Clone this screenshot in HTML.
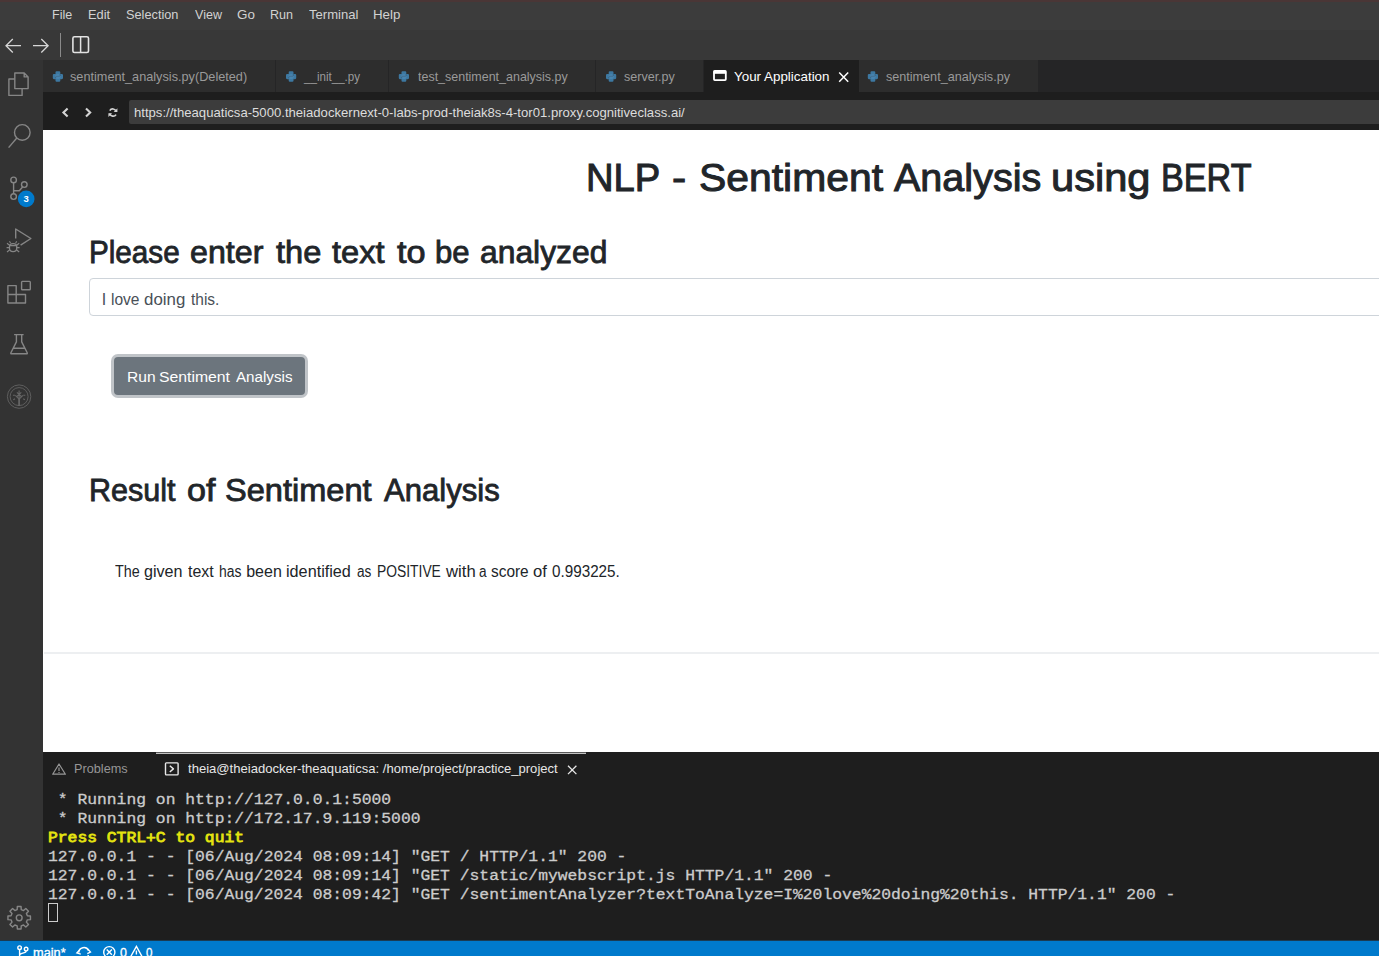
<!DOCTYPE html>
<html>
<head>
<meta charset="utf-8">
<style>
*{box-sizing:border-box;margin:0;padding:0}
html,body{width:1379px;height:956px;overflow:hidden;background:#1e1e1e;font-family:"Liberation Sans",sans-serif;}
.abs{position:absolute}
.t{position:absolute;white-space:nowrap;transform-origin:0 0}
#menubar{position:absolute;left:0;top:0;width:1379px;height:30px;background:#3c3c3c;border-top:2px solid #4a3636}
#toolbar{position:absolute;left:0;top:30px;width:1379px;height:30px;background:#383838}
#activity{position:absolute;left:0;top:60px;width:43px;height:880px;background:#333333}
#tabs{position:absolute;left:43px;top:60px;width:1336px;height:32px;background:#252526}
.tab{position:absolute;top:0;height:32px;background:#2d2d2d;color:#9a9a9a;font-size:13px;line-height:32px;white-space:nowrap;border-right:1px solid #252526}
.tab.active{background:#1e1e1e;color:#ffffff;border-right:none}
.tab .lbl{position:absolute;top:0;transform-origin:0 50%}
#urlbar{position:absolute;left:43px;top:92px;width:1336px;height:38px;background:#1e1e1e}
#urlinput{position:absolute;left:86px;top:8px;width:1252px;height:24px;background:#3c3c3c;border-radius:2px}
#web{position:absolute;left:43px;top:130px;width:1336px;height:622px;background:#ffffff;overflow:hidden;color:#212529}
#panel{position:absolute;left:43px;top:752px;width:1336px;height:188px;background:#1e1e1e}
#status span{-webkit-text-stroke:0.3px #fff}
#status{position:absolute;left:0;top:940px;width:1379px;height:16px;background:#007acc;overflow:hidden}
#term{position:absolute;left:4.85px;top:38.5px;font-family:"Liberation Mono",monospace;font-size:15.5px;line-height:19px;color:#cccccc;white-space:pre;transform:scaleX(1.0539);transform-origin:0 0;-webkit-text-stroke:0.3px #cccccc}
#term .y{color:#e5e510;-webkit-text-stroke:0.8px #e5e510}
svg{position:absolute;overflow:visible}
</style>
</head>
<body>
<div id="menubar"></div>
<div class="t" id="m0" style="left:52.24px;top:5.20px;font-size:13px;line-height:19.5px;color:#d2d2d2;transform:scaleX(0.9650)">File</div>
<div class="t" id="m1" style="left:88.01px;top:5.20px;font-size:13px;line-height:19.5px;color:#d2d2d2;transform:scaleX(0.9857)">Edit</div>
<div class="t" id="m2" style="left:125.82px;top:5.20px;font-size:13px;line-height:19.5px;color:#d2d2d2;transform:scaleX(0.9808)">Selection</div>
<div class="t" id="m3" style="left:194.90px;top:5.20px;font-size:13px;line-height:19.5px;color:#d2d2d2;transform:scaleX(0.9643)">View</div>
<div class="t" id="m4" style="left:236.87px;top:5.20px;font-size:13px;line-height:19.5px;color:#d2d2d2;transform:scaleX(1.0312)">Go</div>
<div class="t" id="m5" style="left:269.94px;top:5.20px;font-size:13px;line-height:19.5px;color:#d2d2d2;transform:scaleX(0.9636)">Run</div>
<div class="t" id="m6" style="left:308.70px;top:5.20px;font-size:13px;line-height:19.5px;color:#d2d2d2;transform:scaleX(1.0042)">Terminal</div>
<div class="t" id="m7" style="left:372.98px;top:5.20px;font-size:13px;line-height:19.5px;color:#d2d2d2;transform:scaleX(1.0240)">Help</div>
<div id="toolbar"></div>
<svg style="left:0;top:30px" width="100" height="30" viewBox="0 30 100 30" fill="none" stroke="#d6d6d6" stroke-width="1.3" stroke-linecap="butt" stroke-linejoin="miter">
<path d="M21,45.7 H6 M12.8,39 L6,45.7 L12.8,52.5"/>
<path d="M33,45.7 H48 M41.3,39 L48.1,45.7 L41.3,52.5"/>
<path d="M60.5,33 V57" stroke="#8a8a8a" stroke-width="1"/>
<rect x="72.9" y="36.7" width="15.6" height="15.8" rx="1.6" stroke="#e2e2e2" stroke-width="1.6"/>
<path d="M80.6,37 V52.4" stroke="#e2e2e2" stroke-width="1.5"/>
</svg>
<div id="activity"></div>
<svg style="left:0;top:60px" width="43" height="880" viewBox="0 60 43 880" fill="none" stroke="#868686" stroke-width="1.4" stroke-linejoin="round">
<!-- files -->
<path d="M14.8,73 H24.2 L28.1,76.9 V88.6 H14.8 Z M24.2,73 V76.9 H28.1"/>
<path d="M14.8,79 H8.9 V95.4 H22.1 V88.6"/>
<!-- search -->
<circle cx="22.3" cy="132.4" r="7.8"/>
<path d="M16.8,138 L8.6,147.6"/>
<!-- scm -->
<circle cx="13.6" cy="179.9" r="2.8"/><circle cx="13.6" cy="196.6" r="2.8"/><circle cx="24.3" cy="184.6" r="2.8"/>
<path d="M13.6,182.7 V193.8 M22.6,187 L19.3,190.7 H13.6"/>
<circle cx="26.2" cy="198.9" r="8.3" fill="#007acc" stroke="none"/>
<!-- debug -->
<path d="M15.7,238.5 V229 L30.9,238.5 L20.6,245.2"/>
<path d="M9.5,246.3 C9.5,242.6 16.7,242.6 16.7,246.3 V248.6 C16.7,252.6 9.5,252.6 9.5,248.6 Z" stroke-width="1.3"/>
<path d="M9.5,245.6 H16.7 M9.5,245.2 L7,243.3 M9.5,247.6 H6.6 M9.5,250 L7,252 M16.7,245.2 L19.2,243.3 M16.7,247.6 H19.6 M16.7,250 L19.2,252 M10.6,242.8 L9.4,241.4 M15.6,242.8 L16.8,241.4" stroke-width="1.1"/>
<!-- extensions -->
<path d="M7.9,285.6 H16.2 V294.5 H25.5 V303 H7.9 Z M7.9,294.5 H16.2 V303"/>
<rect x="21.6" y="281.4" width="8.7" height="8.3" rx="0.8"/>
<!-- flask -->
<path d="M14.1,334.6 H23.6 M16.4,334.6 V341.9 L10.9,352.7 Q10.4,353.8 11.6,353.8 H26.5 Q27.7,353.8 27.2,352.7 L21.7,341.9 V334.6 M13.3,348.2 H24.8"/>
<!-- tree -->
<g stroke="#5e5e5e" stroke-width="1">
<circle cx="19.1" cy="396.6" r="11.7"/><circle cx="19.1" cy="396.6" r="9"/>
<path d="M19.1,406 V398.2" stroke-width="1.7" stroke="#686868"/><path d="M19.1,399.2 L15.3,395.4 M19.1,399.2 L22.9,395.4 M19.1,398 V390.4 M16.9,392.3 L21.3,396.5 M21.3,392.3 L16.9,396.5 M12.9,395.2 h2 M23.3,395.2 h2 M13.3,399.8 l1.7,-1.1 M24.9,399.8 l-1.7,-1.1" stroke-width="1.1" stroke="#666666"/>
</g>
<!-- gear -->
<path d="M17.17,909.65 L17.33,906.55 L21.07,906.55 L21.23,909.65 L23.53,910.60 L25.83,908.52 L28.48,911.17 L26.40,913.47 L27.35,915.77 L30.45,915.93 L30.45,919.67 L27.35,919.83 L26.40,922.13 L28.48,924.43 L25.83,927.08 L23.53,925.00 L21.23,925.95 L21.07,929.05 L17.33,929.05 L17.17,925.95 L14.87,925.00 L12.57,927.08 L9.92,924.43 L12.00,922.13 L11.05,919.83 L7.95,919.67 L7.95,915.93 L11.05,915.77 L12.00,913.47 L9.92,911.17 L12.57,908.52 L14.87,910.60 Z"/>
<circle cx="19.2" cy="917.8" r="2.9"/>
</svg>
<div class="t" style="left:23.6px;top:192.6px;font-size:9.5px;line-height:11px;font-weight:bold;color:#fff">3</div>
<div id="tabs">
<div class="tab" style="left:0px;width:232.5px"></div>
<div class="tab" style="left:232.5px;width:113px"></div>
<div class="tab" style="left:345.5px;width:207px"></div>
<div class="tab" style="left:552.5px;width:108.1px"></div>
<div class="tab active" style="left:660.6px;width:155px"></div>
<div class="tab" style="left:815.6px;width:180.4px"></div>
</div>
<div class="t" id="tb0" style="left:69.92px;top:66.90px;font-size:13px;line-height:19.5px;color:#9a9a9a;transform:scaleX(0.9767)">sentiment_analysis.py(Deleted)</div>
<div class="t" id="tb1" style="left:304.00px;top:66.90px;font-size:13px;line-height:19.5px;color:#9a9a9a;transform:scaleX(0.8921)">__init__.py</div>
<div class="t" id="tb2" style="left:417.80px;top:66.90px;font-size:13px;line-height:19.5px;color:#9a9a9a;transform:scaleX(0.9590)">test_sentiment_analysis.py</div>
<div class="t" id="tb3" style="left:623.74px;top:66.90px;font-size:13px;line-height:19.5px;color:#9a9a9a;transform:scaleX(0.9635)">server.py</div>
<div class="t" id="tb4" style="left:734.47px;top:66.90px;font-size:13px;line-height:19.5px;color:#ffffff;transform:scaleX(1.0297)">Your Application</div>
<div class="t" id="tb5" style="left:885.53px;top:66.90px;font-size:13px;line-height:19.5px;color:#9a9a9a;transform:scaleX(0.9693)">sentiment_analysis.py</div>


<div id="urlbar">
<div id="urlinput"></div>
<div class="t" id="urltxt" style="left:90.79px;top:11.10px;font-size:13px;line-height:19.5px;color:#dddddd;transform:scaleX(1.0086)">https://theaquaticsa-5000.theiadockernext-0-labs-prod-theiak8s-4-tor01.proxy.cognitiveclass.ai/</div>
</div>
<svg style="left:0;top:60px" width="1379" height="72" viewBox="0 60 1379 72" fill="none"><path d="M55.50,72.30 q0,-1.1 1.1,-1.1 h2.6 q1.1,0 1.1,1.1 v1.7 h1.6 q1.1,0 1.1,1.1 v3 q0,1.1 -1.1,1.1 h-1.6 v1.5 q0,1.1 -1.1,1.1 h-2.6 q-1.1,0 -1.1,-1.1 v-1.5 h-1.6 q-1.1,0 -1.1,-1.1 v-3 q0,-1.1 1.1,-1.1 h1.6 z" fill="#3d78a1" stroke="none"/><path d="M55.70,78.10 v-0.9 q0,-0.9 0.9,-0.9 h2.6 q0.9,0 0.9,-0.9 v-0.9" stroke="#2d2d2d" stroke-width="0.55" fill="none" opacity="0.75"/><circle cx="57.90" cy="76.50" r="2.6" fill="#5b9ccb" opacity="0.35" stroke="none"/><path d="M288.70,72.30 q0,-1.1 1.1,-1.1 h2.6 q1.1,0 1.1,1.1 v1.7 h1.6 q1.1,0 1.1,1.1 v3 q0,1.1 -1.1,1.1 h-1.6 v1.5 q0,1.1 -1.1,1.1 h-2.6 q-1.1,0 -1.1,-1.1 v-1.5 h-1.6 q-1.1,0 -1.1,-1.1 v-3 q0,-1.1 1.1,-1.1 h1.6 z" fill="#3d78a1" stroke="none"/><path d="M288.90,78.10 v-0.9 q0,-0.9 0.9,-0.9 h2.6 q0.9,0 0.9,-0.9 v-0.9" stroke="#2d2d2d" stroke-width="0.55" fill="none" opacity="0.75"/><circle cx="291.10" cy="76.50" r="2.6" fill="#5b9ccb" opacity="0.35" stroke="none"/><path d="M401.50,72.30 q0,-1.1 1.1,-1.1 h2.6 q1.1,0 1.1,1.1 v1.7 h1.6 q1.1,0 1.1,1.1 v3 q0,1.1 -1.1,1.1 h-1.6 v1.5 q0,1.1 -1.1,1.1 h-2.6 q-1.1,0 -1.1,-1.1 v-1.5 h-1.6 q-1.1,0 -1.1,-1.1 v-3 q0,-1.1 1.1,-1.1 h1.6 z" fill="#3d78a1" stroke="none"/><path d="M401.70,78.10 v-0.9 q0,-0.9 0.9,-0.9 h2.6 q0.9,0 0.9,-0.9 v-0.9" stroke="#2d2d2d" stroke-width="0.55" fill="none" opacity="0.75"/><circle cx="403.90" cy="76.50" r="2.6" fill="#5b9ccb" opacity="0.35" stroke="none"/><path d="M608.70,72.30 q0,-1.1 1.1,-1.1 h2.6 q1.1,0 1.1,1.1 v1.7 h1.6 q1.1,0 1.1,1.1 v3 q0,1.1 -1.1,1.1 h-1.6 v1.5 q0,1.1 -1.1,1.1 h-2.6 q-1.1,0 -1.1,-1.1 v-1.5 h-1.6 q-1.1,0 -1.1,-1.1 v-3 q0,-1.1 1.1,-1.1 h1.6 z" fill="#3d78a1" stroke="none"/><path d="M608.90,78.10 v-0.9 q0,-0.9 0.9,-0.9 h2.6 q0.9,0 0.9,-0.9 v-0.9" stroke="#2d2d2d" stroke-width="0.55" fill="none" opacity="0.75"/><circle cx="611.10" cy="76.50" r="2.6" fill="#5b9ccb" opacity="0.35" stroke="none"/><path d="M870.50,72.30 q0,-1.1 1.1,-1.1 h2.6 q1.1,0 1.1,1.1 v1.7 h1.6 q1.1,0 1.1,1.1 v3 q0,1.1 -1.1,1.1 h-1.6 v1.5 q0,1.1 -1.1,1.1 h-2.6 q-1.1,0 -1.1,-1.1 v-1.5 h-1.6 q-1.1,0 -1.1,-1.1 v-3 q0,-1.1 1.1,-1.1 h1.6 z" fill="#3d78a1" stroke="none"/><path d="M870.70,78.10 v-0.9 q0,-0.9 0.9,-0.9 h2.6 q0.9,0 0.9,-0.9 v-0.9" stroke="#2d2d2d" stroke-width="0.55" fill="none" opacity="0.75"/><circle cx="872.90" cy="76.50" r="2.6" fill="#5b9ccb" opacity="0.35" stroke="none"/><rect x="714" y="70.9" width="11.8" height="9.2" rx="0.8" stroke="#ffffff" stroke-width="1.8"/><path d="M713.6,72.2 H726.2" stroke="#ffffff" stroke-width="3.2"/><path d="M839.2,72.6 L848.2,81.8 M848.2,72.6 L839.2,81.8" stroke="#ffffff" stroke-width="1.5"/><path d="M67.6,108.4 L63.4,112.5 L67.6,116.6" stroke="#d4d4d4" stroke-width="2.1"/><path d="M86,108.4 L90.2,112.5 L86,116.6" stroke="#d4d4d4" stroke-width="2.1"/><path d="M116,111.6 A3.4,3.4 0 0 0 109.8,110.6 M109.8,113.6 A3.4,3.4 0 0 0 116,114.6" stroke="#d4d4d4" stroke-width="1.7"/><path d="M117.4,108.2 V111.9 H113.7 Z M108.4,117 V113.3 H112.1 Z" fill="#d4d4d4"/></svg>
<div id="web">
<div class="t" id="h1w0" style="left:543.46px;top:19.00px;font-size:39px;line-height:58.5px;-webkit-text-stroke:1px #212529;transform:scaleX(0.9803)">NLP</div>
<div class="t" id="h1w1" style="left:628.91px;top:19.00px;font-size:39px;line-height:58.5px;-webkit-text-stroke:1px #212529;transform:scaleX(1.0909)">-</div>
<div class="t" id="h1w2" style="left:655.55px;top:19.00px;font-size:39px;line-height:58.5px;-webkit-text-stroke:1px #212529;transform:scaleX(1.0480)">Sentiment</div>
<div class="t" id="h1w3" style="left:851.00px;top:19.00px;font-size:39px;line-height:58.5px;-webkit-text-stroke:1px #212529;transform:scaleX(1.0138)">Analysis</div>
<div class="t" id="h1w4" style="left:1007.87px;top:19.00px;font-size:39px;line-height:58.5px;-webkit-text-stroke:1px #212529;transform:scaleX(1.0674)">using</div>
<div class="t" id="h1w5" style="left:1118.37px;top:19.00px;font-size:39px;line-height:58.5px;-webkit-text-stroke:1px #212529;transform:scaleX(0.8760)">BERT</div>
<div class="t" id="h2aw0" style="left:46.16px;top:99.75px;font-size:30.5px;line-height:45.75px;-webkit-text-stroke:0.8px #212529;transform:scaleX(0.9722)">Please</div>
<div class="t" id="h2aw1" style="left:146.84px;top:99.75px;font-size:30.5px;line-height:45.75px;-webkit-text-stroke:0.8px #212529;transform:scaleX(1.0551)">enter</div>
<div class="t" id="h2aw2" style="left:232.50px;top:99.75px;font-size:30.5px;line-height:45.75px;-webkit-text-stroke:0.8px #212529;transform:scaleX(1.0690)">the</div>
<div class="t" id="h2aw3" style="left:288.50px;top:99.75px;font-size:30.5px;line-height:45.75px;-webkit-text-stroke:0.8px #212529;transform:scaleX(1.0680)">text</div>
<div class="t" id="h2aw4" style="left:353.80px;top:99.75px;font-size:30.5px;line-height:45.75px;-webkit-text-stroke:0.8px #212529;transform:scaleX(1.1240)">to</div>
<div class="t" id="h2aw5" style="left:392.18px;top:99.75px;font-size:30.5px;line-height:45.75px;-webkit-text-stroke:0.8px #212529;transform:scaleX(1.0188)">be</div>
<div class="t" id="h2aw6" style="left:436.56px;top:99.75px;font-size:30.5px;line-height:45.75px;-webkit-text-stroke:0.8px #212529;transform:scaleX(1.0433)">analyzed</div>
<div class="abs" style="left:46px;top:148px;width:1400px;height:38px;border:1px solid #ced4da;border-radius:4px"></div>
<div class="t" id="inpw0" style="left:58.70px;top:157.90px;font-size:16px;line-height:24px;color:#495057;transform:scaleX(1.0000)">I</div>
<div class="t" id="inpw1" style="left:68.03px;top:157.90px;font-size:16px;line-height:24px;color:#495057;transform:scaleX(0.9714)">love</div>
<div class="t" id="inpw2" style="left:100.55px;top:157.90px;font-size:16px;line-height:24px;color:#495057;transform:scaleX(1.0541)">doing</div>
<div class="t" id="inpw3" style="left:147.50px;top:157.90px;font-size:16px;line-height:24px;color:#495057;transform:scaleX(0.9679)">this.</div>
<div class="abs" style="left:71px;top:227px;width:191px;height:38px;background:#6c757d;border-radius:4px;box-shadow:0 0 0 3px rgba(130,138,145,.5)"></div>
<div class="t" id="btnw0" style="left:83.90px;top:235.10px;font-size:15.5px;line-height:23.25px;color:#fff;transform:scaleX(1.0037)">Run</div>
<div class="t" id="btnw1" style="left:115.78px;top:235.10px;font-size:15.5px;line-height:23.25px;color:#fff;transform:scaleX(1.0174)">Sentiment</div>
<div class="t" id="btnw2" style="left:192.60px;top:235.10px;font-size:15.5px;line-height:23.25px;color:#fff;transform:scaleX(0.9789)">Analysis</div>
<div class="t" id="h2bw0" style="left:46.10px;top:337.90px;font-size:30.5px;line-height:45.75px;-webkit-text-stroke:0.8px #212529;transform:scaleX(1.0012)">Result</div>
<div class="t" id="h2bw1" style="left:143.58px;top:337.90px;font-size:30.5px;line-height:45.75px;-webkit-text-stroke:0.8px #212529;transform:scaleX(1.1160)">of</div>
<div class="t" id="h2bw2" style="left:181.93px;top:337.90px;font-size:30.5px;line-height:45.75px;-webkit-text-stroke:0.8px #212529;transform:scaleX(1.0672)">Sentiment</div>
<div class="t" id="h2bw3" style="left:340.50px;top:337.90px;font-size:30.5px;line-height:45.75px;-webkit-text-stroke:0.8px #212529;transform:scaleX(1.0186)">Analysis</div>
<div class="t" id="rw0" style="left:71.80px;top:429.70px;font-size:16px;line-height:24px;transform:scaleX(0.8963)">The</div>
<div class="t" id="rw1" style="left:101.09px;top:429.70px;font-size:16px;line-height:24px;transform:scaleX(1.0083)">given</div>
<div class="t" id="rw2" style="left:144.50px;top:429.70px;font-size:16px;line-height:24px;transform:scaleX(0.9962)">text</div>
<div class="t" id="rw3" style="left:175.73px;top:429.70px;font-size:16px;line-height:24px;transform:scaleX(0.8708)">has</div>
<div class="t" id="rw4" style="left:203.20px;top:429.70px;font-size:16px;line-height:24px;transform:scaleX(1.0000)">been</div>
<div class="t" id="rw5" style="left:243.39px;top:429.70px;font-size:16px;line-height:24px;transform:scaleX(1.0129)">identified</div>
<div class="t" id="rw6" style="left:313.75px;top:429.70px;font-size:16px;line-height:24px;transform:scaleX(0.8500)">as</div>
<div class="t" id="rw7" style="left:333.53px;top:429.70px;font-size:16px;line-height:24px;transform:scaleX(0.8653)">POSITIVE</div>
<div class="t" id="rw8" style="left:402.60px;top:429.70px;font-size:16px;line-height:24px;transform:scaleX(1.0429)">with</div>
<div class="t" id="rw9" style="left:435.85px;top:429.70px;font-size:16px;line-height:24px;transform:scaleX(0.8500)">a</div>
<div class="t" id="rw10" style="left:448.24px;top:429.70px;font-size:16px;line-height:24px;transform:scaleX(0.9632)">score</div>
<div class="t" id="rw11" style="left:490.36px;top:429.70px;font-size:16px;line-height:24px;transform:scaleX(1.0385)">of</div>
<div class="t" id="rw12" style="left:509.25px;top:429.70px;font-size:16px;line-height:24px;transform:scaleX(0.9522)">0.993225.</div>
<div class="abs" style="left:1px;top:522px;width:1336px;height:2px;background:#edeff1"></div>
</div>
<div id="panel">
<div class="abs" style="left:113px;top:0;width:430px;height:1px;background:#5a5a5a"></div><div class="abs" style="left:113px;top:1px;width:430px;height:1px;background:#c2c2c2"></div>
<div class="t" id="prob" style="left:30.52px;top:7.40px;font-size:13px;line-height:19.5px;color:#969696;transform:scaleX(0.9778)">Problems</div>
<div class="t" id="ttl" style="left:144.60px;top:7.40px;font-size:13px;line-height:19.5px;color:#e7e7e7;transform:scaleX(1.0046)">theia@theiadocker-theaquaticsa: /home/project/practice_project</div>
<div id="term"> * Running on http://127.0.0.1:5000
 * Running on http://172.17.9.119:5000
<span class="y">Press CTRL+C to quit</span>
127.0.0.1 - - [06/Aug/2024 08:09:14] "GET / HTTP/1.1" 200 -
127.0.0.1 - - [06/Aug/2024 08:09:14] "GET /static/mywebscript.js HTTP/1.1" 200 -
127.0.0.1 - - [06/Aug/2024 08:09:42] "GET /sentimentAnalyzer?textToAnalyze=I%20love%20doing%20this. HTTP/1.1" 200 -
</div>
<div class="abs" style="left:5px;top:151px;width:10px;height:19px;border:1px solid #cccccc"></div>
</div>
<svg style="left:0;top:752px" width="700" height="40" viewBox="0 752 700 40" fill="none" stroke="#969696" stroke-width="1.2" stroke-linejoin="round">
<path d="M59,764 L65.4,774.2 H52.7 Z M59,767.6 V771 M59,772 V773"/>
<rect x="165.5" y="762.9" width="12.6" height="12" rx="0.8" stroke="#e7e7e7" stroke-width="1.4"/>
<path d="M169.8,765.8 L173.4,768.9 L169.8,772" stroke="#e7e7e7" stroke-width="1.4"/>
<path d="M568,765.7 L576.4,774.1 M576.4,765.7 L568,774.1" stroke="#e7e7e7" stroke-width="1.3"/>
</svg>
<div class="abs" style="left:0;top:940px;width:1379px;height:1px;background:#1a3b52;z-index:5"></div>
<div id="status">
<span class="t" id="st1" style="left:32.63px;top:3.80px;font-size:12px;line-height:18px;color:#fff;transform:scaleX(1.0655)">main*</span>
<span class="t" id="st2" style="left:119.80px;top:3.80px;font-size:12px;line-height:18px;color:#fff;transform:scaleX(1.0333)">0</span>
<span class="t" id="st3" style="left:146.20px;top:3.80px;font-size:12px;line-height:18px;color:#fff;transform:scaleX(0.9667)">0</span>
<svg style="left:0;top:0" width="200" height="16" viewBox="0 940 200 16" fill="none" stroke="#ffffff" stroke-width="1.4">
<circle cx="19.6" cy="947.7" r="1.8"/><circle cx="26.1" cy="949.1" r="1.8"/><path d="M19.6,949.5 V957 M26.1,950.9 C26.1,953.6 19.6,952.6 19.6,955.2"/>
<path d="M78.7,952.6 A5.2,5.2 0 0 1 88.6,950.6 M79.4,956.8 A5.2,5.2 0 0 0 88.4,955"/><path d="M79.6,949.9 L76.8,953 L80.8,954.2 M87.3,953.6 L90.5,952 L87.8,949" stroke-width="1.3"/>
<circle cx="109.3" cy="952.2" r="5.6"/><path d="M106.7,949.6 L111.9,954.8 M111.9,949.6 L106.7,954.8"/>
<path d="M136.4,946.4 L142.4,957.2 H130.4 Z M136.4,950.6 V954.4"/>
</svg>
</div>
</body>
</html>
